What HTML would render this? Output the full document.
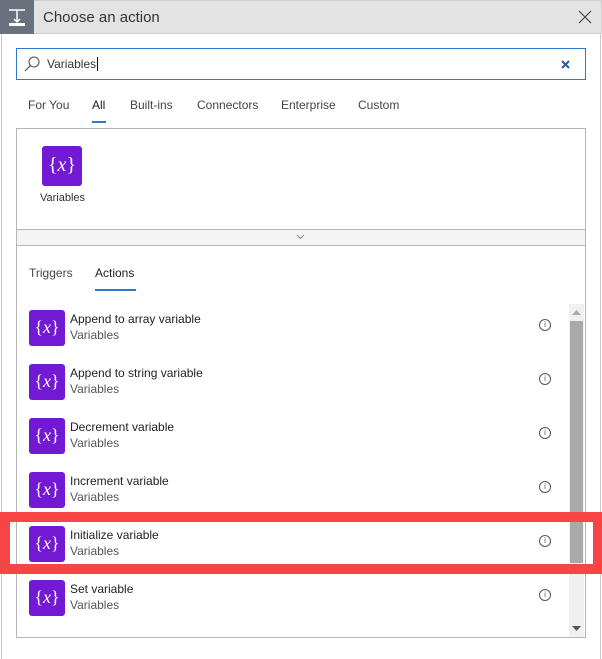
<!DOCTYPE html>
<html><head><style>
*{box-sizing:border-box;margin:0;padding:0}
body{width:602px;height:659px;background:#fff;font-family:"Liberation Sans",sans-serif;position:relative;overflow:hidden;color:#333}
.a{position:absolute}
.hdr{left:0;top:0;width:602px;height:34px;background:#e3e3e3;border:1px solid #cfcfcf}
.outer{left:1px;top:34px;width:600px;height:625px;border-left:1px solid #c8c8c8;border-right:1px solid #c8c8c8}
.ico{width:36px;height:36px;background:#7419d3;border-radius:3px;color:#fff;font-family:"Liberation Serif",serif;font-size:18px;text-align:center;line-height:34px;font-style:normal}
.ico i{font-style:italic}
.t{font-size:12px;color:#222}
.s{font-size:12px;color:#555}
.info{width:12px;height:12px;border:1px solid #555;border-radius:50%;font-size:8px;line-height:10px;text-align:center;color:#555}
</style></head><body>
<div class="a hdr"></div>
<div class="a" style="left:0;top:0;width:34px;height:34px;background:#68717c"></div>
<svg class="a" style="left:0;top:0" width="34" height="34"><g stroke="#fff" stroke-width="1.5" fill="none"><line x1="9" y1="10" x2="25" y2="10"/><line x1="17" y1="10" x2="17" y2="22"/><polyline points="14,19 17,22 20,19"/></g><rect x="9" y="23" width="16" height="3" fill="#fff"/></svg>
<div class="a" style="left:43px;top:9px;font-size:15px;color:#333">Choose an action</div>
<svg class="a" style="left:577px;top:9px" width="16" height="16"><path d="M2 2L14 14M14 2L2 14" stroke="#444" stroke-width="1.2"/></svg>
<div class="a outer"></div>
<div class="a" style="left:16px;top:48px;width:570px;height:32px;border:1px solid #2b79d0"></div>
<svg class="a" style="left:23px;top:55px" width="18" height="18"><circle cx="11" cy="7" r="5" stroke="#555" fill="none" stroke-width="1.1"/><line x1="7.5" y1="10.5" x2="2" y2="16" stroke="#555" stroke-width="1.2"/></svg>
<div class="a" style="left:47px;top:57px;font-size:12px;color:#333">Variables<span style="border-left:1px solid #000;margin-left:1px"></span></div>
<svg class="a" style="left:560px;top:59px" width="11" height="11"><path d="M2 2L9 9M9 2L2 9" stroke="#2c5aa0" stroke-width="2"/></svg>
<div class="a" style="top:98px;left:28px;font-size:12px;color:#444">For You</div>
<div class="a" style="top:98px;left:92px;font-size:12px;color:#222">All</div>
<div class="a" style="top:121px;left:92px;width:14px;height:2px;background:#2b79d0"></div>
<div class="a" style="top:98px;left:130px;font-size:12px;color:#444">Built-ins</div>
<div class="a" style="top:98px;left:197px;font-size:12px;color:#444">Connectors</div>
<div class="a" style="top:98px;left:281px;font-size:12px;color:#444">Enterprise</div>
<div class="a" style="top:98px;left:358px;font-size:12px;color:#444">Custom</div>
<div class="a" style="left:16px;top:128px;width:570px;height:510px;border:1px solid #b5b5b5"></div>
<div class="a ico" style="left:42px;top:146px;width:40px;height:40px;line-height:38px;font-size:20px">{<i>x</i>}</div>
<div class="a" style="left:40px;top:192px;font-size:11px;color:#333">Variables</div>
<div class="a" style="left:17px;top:229px;width:568px;height:17px;background:#f4f4f4;border-top:1px solid #b5b5b5;border-bottom:1px solid #b5b5b5"></div>
<svg class="a" style="left:296px;top:234px" width="9" height="6"><polyline points="1,1 4.5,4.5 8,1" stroke="#888" fill="none"/></svg>
<div class="a" style="top:266px;left:29px;font-size:12px;color:#444">Triggers</div>
<div class="a" style="top:266px;left:95px;font-size:12px;color:#222">Actions</div>
<div class="a" style="top:289px;left:95px;width:41px;height:2px;background:#2b79d0"></div>
<div class="a" style="left:569px;top:304px;width:15px;height:333px;background:#f0f0f0"></div>
<div class="a" style="left:570px;top:321px;width:13px;height:242px;background:#a9a9a9"></div>
<svg class="a" style="left:572px;top:310px" width="9" height="6"><polygon points="0,5 4.5,0 9,5" fill="#aaa"/></svg>
<svg class="a" style="left:572px;top:626px" width="9" height="6"><polygon points="0,0 4.5,5 9,0" fill="#555"/></svg>
<div class="a ico" style="left:29px;top:310px">{<i>x</i>}</div><div class="a t" style="left:70px;top:312px">Append to array variable</div><div class="a s" style="left:70px;top:328px">Variables</div><div class="a info" style="left:539px;top:319px">i</div>
<div class="a ico" style="left:29px;top:364px">{<i>x</i>}</div><div class="a t" style="left:70px;top:366px">Append to string variable</div><div class="a s" style="left:70px;top:382px">Variables</div><div class="a info" style="left:539px;top:373px">i</div>
<div class="a ico" style="left:29px;top:418px">{<i>x</i>}</div><div class="a t" style="left:70px;top:420px">Decrement variable</div><div class="a s" style="left:70px;top:436px">Variables</div><div class="a info" style="left:539px;top:427px">i</div>
<div class="a ico" style="left:29px;top:472px">{<i>x</i>}</div><div class="a t" style="left:70px;top:474px">Increment variable</div><div class="a s" style="left:70px;top:490px">Variables</div><div class="a info" style="left:539px;top:481px">i</div>
<div class="a ico" style="left:29px;top:526px">{<i>x</i>}</div><div class="a t" style="left:70px;top:528px">Initialize variable</div><div class="a s" style="left:70px;top:544px">Variables</div><div class="a info" style="left:539px;top:535px">i</div>
<div class="a ico" style="left:29px;top:580px">{<i>x</i>}</div><div class="a t" style="left:70px;top:582px">Set variable</div><div class="a s" style="left:70px;top:598px">Variables</div><div class="a info" style="left:539px;top:589px">i</div>
<div class="a" style="left:0;top:512px;width:602px;height:62px;border:10px solid #f94446;border-right-width:9px"></div>
</body></html>
